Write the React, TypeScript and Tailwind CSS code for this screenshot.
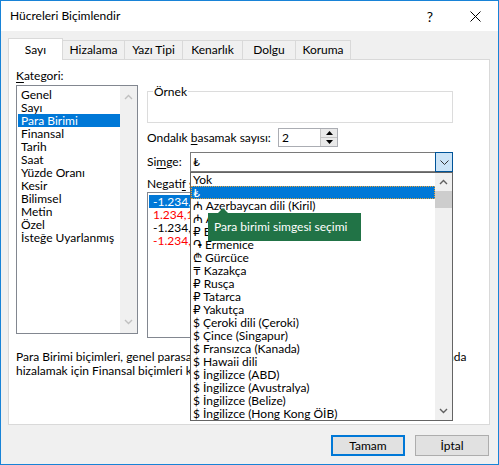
import React from 'react';

const categories = [
  'Genel',
  'Sayı',
  'Para Birimi',
  'Finansal',
  'Tarih',
  'Saat',
  'Yüzde Oranı',
  'Kesir',
  'Bilimsel',
  'Metin',
  'Özel',
  'İsteğe Uyarlanmış',
];

const currencies = [
  'Yok',
  '₺',
  '₼ Azerbaycan dili (Kiril)',
  '₼ Azerbaycan dili (Latin)',
  '₽ Başkurtça',
  '֏ Ermenice',
  '₾ Gürcüce',
  '₸ Kazakça',
  '₽ Rusça',
  '₽ Tatarca',
  '₽ Yakutça',
  '$ Çeroki dili (Çeroki)',
  '$ Çince (Singapur)',
  '$ Fransızca (Kanada)',
  '$ Hawaii dili',
  '$ İngilizce (ABD)',
  '$ İngilizce (Avustralya)',
  '$ İngilizce (Belize)',
  '$ İngilizce (Hong Kong ÖİB)',
];

const negatives = [
  { text: '-1.234,10 ₺', red: false },
  { text: '1.234,10 ₺', red: true },
  { text: '-1.234,10 ₺', red: false },
  { text: '-1.234,10 ₺', red: true },
];

const tabs = [
  { label: 'Hizalama', w: 'w-[62px]' },
  { label: 'Yazı Tipi', w: 'w-[58px]' },
  { label: 'Kenarlık', w: 'w-[60px]' },
  { label: 'Dolgu', w: 'w-[53px]' },
  { label: 'Koruma', w: 'w-[55px]' },
];

const Chevron = ({ dir, className }: { dir: 'up' | 'down'; className?: string }) => (
  <svg width="9" height="6" viewBox="0 0 9 6" className={className}>
    <path
      d={dir === 'up' ? 'M1 5 L4.5 1.5 L8 5' : 'M1 1 L4.5 4.5 L8 1'}
      fill="none"
      stroke="currentColor"
      strokeWidth="1.4"
    />
  </svg>
);

const App: React.FC = () => {
  return (
    <div className="relative w-[499px] h-[465px] border border-[#1883d7] bg-[#f0f0f0] flex flex-col text-[12px] text-black font-['Lato','DejaVu_Sans',sans-serif] overflow-hidden">
      {/* title bar */}
      <div className="h-[30px] bg-white flex items-center pl-[9px] shrink-0">
        <span className="text-[12px] flex-1">Hücreleri Biçimlendir</span>
        <span className="w-[12px] text-center text-[14px] mr-[34px]">?</span>
        <svg width="11" height="11" viewBox="0 0 11 11" className="mr-[17px]">
          <path d="M0.5 0.5 L10.5 10.5 M10.5 0.5 L0.5 10.5" stroke="#000" strokeWidth="1" />
        </svg>
      </div>

      <div className="flex flex-col pl-[7px] pr-[8px]">
        {/* tabs */}
        <div className="mt-[7px] h-[21px] flex items-end">
          <div className="relative z-10 -mb-px w-[55px] h-[22px] bg-white border border-b-0 border-[#d9d9d9] flex items-center justify-center">
            Sayı
          </div>
          {tabs.map(tab => (
            <div
              key={tab.label}
              className={`${tab.w} h-[19px] border border-b-0 border-l-0 border-[#d9d9d9] flex items-center justify-center`}
            >
              {tab.label}
            </div>
          ))}
        </div>

        {/* panel */}
        <div className="h-[366px] bg-white border border-[#d9d9d9] flex flex-col">
          <div className="flex gap-[9px] pl-[7px] pt-[8px]">
            {/* category column */}
            <div className="w-[122px] flex flex-col">
              <div className="leading-[15px]">
                <span className="underline underline-offset-2">K</span>ategori:
              </div>
              <div className="mt-[2px] h-[249px] border border-[#828790] bg-white flex">
                <div className="flex-1 pt-[2px] pl-px">
                  {categories.map(c => (
                    <div
                      key={c}
                      className={`h-[13px] leading-[13px] pl-[3px] whitespace-nowrap ${c === 'Para Birimi' ? 'bg-[#0078d7] text-white' : ''}`}
                    >
                      {c}
                    </div>
                  ))}
                </div>
                <div className="w-[17px] bg-[#f0f0f0] flex flex-col items-center justify-between py-[8px] text-[#c0c0c0]">
                  <Chevron dir="up" />
                  <Chevron dir="down" />
                </div>
              </div>
            </div>

            {/* right column */}
            <div className="w-[306px] mt-[23px] flex flex-col">
              <div className="relative h-[32px] border border-[#dcdcdc]">
                <span className="absolute left-[5px] -top-[8px] bg-white px-px leading-[15px]">Örnek</span>
              </div>

              <div className="mt-[5px] h-[19px] flex items-center">
                <div className="w-[131px]">
                  Ondalık <span className="underline underline-offset-2">b</span>asamak sayısı:
                </div>
                <div className="w-[60px] h-[19px] border border-[#abadb3] bg-white flex">
                  <div className="flex-1 pl-[3px] leading-[17px]">2</div>
                  <div className="w-[17px] flex flex-col border-l border-[#c4c4c4]">
                    <div className="flex-1 bg-[#e9e9e9] border-b border-[#c4c4c4] flex items-center justify-center">
                      <svg width="7" height="4" viewBox="0 0 7 4">
                        <path d="M0 4 L3.5 0 L7 4 Z" fill="#000" />
                      </svg>
                    </div>
                    <div className="flex-1 bg-[#e9e9e9] flex items-center justify-center">
                      <svg width="7" height="4" viewBox="0 0 7 4">
                        <path d="M0 0 L3.5 4 L7 0 Z" fill="#000" />
                      </svg>
                    </div>
                  </div>
                </div>
              </div>

              <div className="mt-[5px] h-[20px] flex items-center">
                <div className="w-[43px]">
                  Si<span className="underline underline-offset-2">m</span>ge:
                </div>
                <div className="relative w-[263px] h-[20px] flex">
                  <div className="flex-1 border-y border-l border-[#7a7a7a] bg-white pl-[2px] leading-[18px]">₺</div>
                  <div className="w-[18px] border border-[#005499] bg-[#cce4f7] flex items-center justify-center text-[#333]">
                    <svg width="9" height="5" viewBox="0 0 9 5">
                      <path d="M0.5 0.5 L4.5 4.5 L8.5 0.5" fill="none" stroke="currentColor" strokeWidth="1" />
                    </svg>
                  </div>

                  {/* open dropdown */}
                  <div className="absolute top-full left-0 z-20 w-[263px] h-[249px] border border-[#646464] bg-white flex">
                    <div className="flex-1">
                      {currencies.map((c, i) => (
                        <div
                          key={i}
                          className={`h-[13px] leading-[13px] pl-[2px] whitespace-nowrap ${i === 1 ? 'bg-[#0078d7] text-white outline-1 outline-dotted outline-[#e8a33c] -outline-offset-1' : ''}`}
                        >
                          {c}
                        </div>
                      ))}
                    </div>
                    <div className="w-[17px] bg-[#f0f0f0] flex flex-col items-center text-[#606060]">
                      <Chevron dir="up" className="mt-[6px]" />
                      <div className="mt-[6px] w-full h-[17px] bg-[#cdcdcd]" />
                      <div className="flex-1" />
                      <Chevron dir="down" className="mb-[6px]" />
                    </div>
                  </div>
                </div>
              </div>

              <div className="mt-[4px] leading-[15px]">
                Negati<span className="underline underline-offset-2">f</span> sayılar:
              </div>
              <div className="mt-px h-[146px] border border-[#828790] bg-white pt-[2px] px-px">
                {negatives.map((n, i) => (
                  <div
                    key={i}
                    className={`h-[13px] leading-[13px] pl-[4px] w-[110px] ${i === 0 ? 'bg-[#0078d7] text-white' : n.red ? 'text-[#ff0000]' : ''}`}
                  >
                    {n.text}
                  </div>
                ))}
              </div>
            </div>
          </div>

          <p className="mt-[12px] pl-[7px] leading-[14px] whitespace-nowrap">
            Para Birimi biçimleri, genel parasal değerler için kullanılır. Ondalık noktaları bir sütunda
            <br />
            hizalamak için Finansal biçimleri kullanın.
          </p>
        </div>

        {/* buttons */}
        <div className="mt-[10px] flex justify-end gap-[10px] pr-px">
          <button className="w-[74px] h-[21px] border-2 border-[#0078d7] bg-[#e1e1e1] flex items-center justify-center">
            Tamam
          </button>
          <button className="w-[74px] h-[21px] border border-[#adadad] bg-[#e1e1e1] flex items-center justify-center">
            İptal
          </button>
        </div>
      </div>

      {/* tooltip */}
      <div className="absolute left-[207px] top-[212px] z-30 w-[153px] h-[28px] bg-[#217346] text-white flex items-center pl-[6px] whitespace-nowrap">
        <div className="absolute -top-[5px] left-[10px] w-0 h-0 border-l-[5px] border-r-[5px] border-b-[5px] border-l-transparent border-r-transparent border-b-[#217346]" />
        Para birimi simgesi seçimi
      </div>
    </div>
  );
};

export default App;
